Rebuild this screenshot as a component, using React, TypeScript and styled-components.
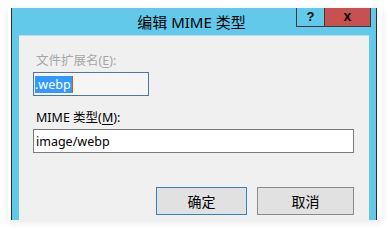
import React from "react";
import styled, { createGlobalStyle } from "styled-components";

const GlobalStyle = createGlobalStyle`
  html, body { margin: 0; padding: 0; background: #ffffff; }
  body { font-family: "Noto Sans", "Noto Sans CJK SC", sans-serif; }
  * { box-sizing: border-box; }
`;

const Page = styled.div`
  padding: 8px;
  width: 390px;
  height: 228px;
`;

const Card = styled.div`
  width: 374px;
  height: 212px;
  background: #ffffff;
  box-shadow: 0 2px 8px rgba(0, 0, 0, 0.1);
  display: flex;
  padding-left: 3px;
  overflow: hidden;
`;

const Window = styled.div`
  width: 366px;
  height: 100%;
  display: flex;
  flex-direction: column;
  background: #62c9eb;
  border-left: 1px solid #2f2f2f;
  border-right: 1px solid #2f2f2f;
`;

const TitleBar = styled.div`
  height: 27px;
  flex: none;
  display: grid;
  grid-template-columns: 1fr auto 1fr;
  align-items: start;
  padding-right: 5px;
`;

const Title = styled.div`
  grid-column: 2;
  align-self: center;
  font-family: "Noto Sans", "Noto Sans CJK SC", sans-serif;
  font-size: 15px;
  line-height: 20px;
  color: #000;
  white-space: nowrap;
  padding-top: 1px;
`;

const Controls = styled.div`
  grid-column: 3;
  justify-self: end;
  display: flex;
`;

const CaptionButton = styled.div<{ $close?: boolean }>`
  height: 19px;
  width: ${(p) => (p.$close ? "46px" : "29px")};
  background: ${(p) => (p.$close ? "#c75050" : "transparent")};
  border: 1px solid #3a3a3a;
  border-top: none;
  border-left: ${(p) => (p.$close ? "none" : "1px solid #3a3a3a")};
  display: flex;
  align-items: center;
  justify-content: center;
  font-family: "Liberation Sans", Arial, sans-serif;
  font-weight: bold;
  font-size: ${(p) => (p.$close ? "14px" : "13px")};
  color: #000;
  line-height: 1;
  padding-bottom: ${(p) => (p.$close ? "3px" : "2px")};
`;

const Client = styled.div`
  flex: 1;
  margin: 0 7px;
  background: #f0f0f0;
  border-top: 1px solid #b5e1f1;
  padding: 17px 15px 0 14px;
  display: flex;
  flex-direction: column;
`;

const Label = styled.div<{ $disabled?: boolean }>`
  font-size: 12.5px;
  line-height: 16px;
  padding-left: 3px;
  color: ${(p) => (p.$disabled ? "#a6a6a6" : "#000")};
  margin-top: ${(p) => (p.$disabled ? "0" : "14px")};
  white-space: nowrap;
  u { text-decoration-thickness: 1px; text-underline-offset: 2px; }
`;

const TextBox = styled.div<{ $focused?: boolean; $width?: string }>`
  margin-top: 3px;
  height: 24px;
  width: ${(p) => p.$width ?? "100%"};
  border: 1px solid ${(p) => (p.$focused ? "#4a77a6" : "#7a7a7a")};
  background: ${(p) => (p.$focused ? "#f5f5f5" : "#ffffff")};
  font-size: 12.5px;
  color: #000;
  display: flex;
  align-items: center;
  padding-left: ${(p) => (p.$focused ? "1px" : "2px")};
  white-space: nowrap;
`;

const Selection = styled.span`
  display: inline-block;
  height: 17px;
  line-height: 17px;
  background: #3399ff;
  color: #fff;
  padding-right: 1px;
  border-right: 1px solid #c8620a;
`;

const ButtonRow = styled.div`
  margin-top: 34px;
  display: flex;
  justify-content: flex-end;
  gap: 10px;
`;

const DialogButton = styled.div<{ $default?: boolean; $width: number }>`
  width: ${(p) => p.$width}px;
  height: 28px;
  background: #e1e1e1;
  border: 1px solid ${(p) => (p.$default ? "#3c7fb1" : "#8a8a8a")};
  font-size: 14px;
  color: #000;
  display: flex;
  align-items: center;
  justify-content: center;
`;

export default function App() {
  return (
    <>
      <GlobalStyle />
      <Page>
        <Card>
          <Window>
            <TitleBar>
              <Title>编辑 MIME 类型</Title>
              <Controls>
                <CaptionButton>?</CaptionButton>
                <CaptionButton $close>x</CaptionButton>
              </Controls>
            </TitleBar>
            <Client>
              <Label $disabled>
                文件扩展名(<u>E</u>):
              </Label>
              <TextBox $focused $width="116px">
                <Selection>.webp</Selection>
              </TextBox>
              <Label>
                MIME 类型(<u>M</u>):
              </Label>
              <TextBox>image/webp</TextBox>
              <ButtonRow>
                <DialogButton $default $width={91}>确定</DialogButton>
                <DialogButton $width={97}>取消</DialogButton>
              </ButtonRow>
            </Client>
          </Window>
        </Card>
      </Page>
    </>
  );
}
